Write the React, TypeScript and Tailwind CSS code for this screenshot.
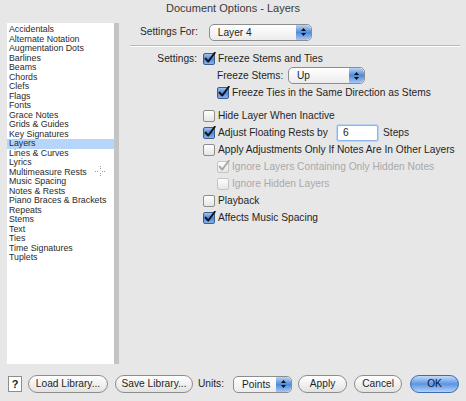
import React from "react";

const items = [
  "Accidentals",
  "Alternate Notation",
  "Augmentation Dots",
  "Barlines",
  "Beams",
  "Chords",
  "Clefs",
  "Flags",
  "Fonts",
  "Grace Notes",
  "Grids & Guides",
  "Key Signatures",
  "Layers",
  "Lines & Curves",
  "Lyrics",
  "Multimeasure Rests",
  "Music Spacing",
  "Notes & Rests",
  "Piano Braces & Brackets",
  "Repeats",
  "Stems",
  "Text",
  "Ties",
  "Time Signatures",
  "Tuplets",
];

function Check({ checked = false, disabled = false }: { checked?: boolean; disabled?: boolean }) {
  return (
    <svg width="13" height="13" viewBox="0 0 13 13" className="shrink-0">
      <defs>
        <linearGradient id="cbBlue" x1="0" y1="0" x2="0" y2="1">
          <stop offset="0" stopColor="#a9c8f2" />
          <stop offset="0.5" stopColor="#4f86d6" />
          <stop offset="1" stopColor="#8fb7ee" />
        </linearGradient>
        <linearGradient id="cbWhite" x1="0" y1="0" x2="0" y2="1">
          <stop offset="0" stopColor="#ffffff" />
          <stop offset="1" stopColor="#e4e4e4" />
        </linearGradient>
      </defs>
      <rect
        x="0.5"
        y="1.5"
        width="11"
        height="11"
        rx="1.5"
        fill={checked && !disabled ? "url(#cbBlue)" : "url(#cbWhite)"}
        stroke={disabled ? "#c4c4c4" : checked ? "#3b5f95" : "#8e8e8e"}
      />
      {checked && (
        <path
          d="M2.6 6.6 L5.2 9.6 L11.8 0.8"
          fill="none"
          stroke={disabled ? "#a8a8a8" : "#111"}
          strokeWidth="1.9"
          strokeLinecap="round"
          strokeLinejoin="round"
        />
      )}
    </svg>
  );
}

function Row({ children, className = "" }: { children: React.ReactNode; className?: string }) {
  return <div className={`flex h-[17px] items-center ${className}`}>{children}</div>;
}

function CheckRow({
  label,
  checked,
  disabled,
  indent,
}: {
  label: string;
  checked?: boolean;
  disabled?: boolean;
  indent?: boolean;
}) {
  return (
    <Row className={indent ? "pl-[14px]" : ""}>
      <Check checked={checked} disabled={disabled} />
      <span className={`ml-[2px] ${disabled ? "text-[#a9a9a9]" : "text-[#1f1f1f]"}`}>{label}</span>
    </Row>
  );
}

function Stepper() {
  return (
    <div className="flex h-full w-[15px] flex-col items-center justify-center gap-[2px] rounded-r-[5px] bg-gradient-to-b from-[#b8d3f6] via-[#4f8ad9] to-[#a6c7f3]">
      <svg width="5" height="3" viewBox="0 0 5 3">
        <path d="M0 3 L2.5 0 L5 3 Z" fill="#111" />
      </svg>
      <svg width="5" height="3" viewBox="0 0 5 3">
        <path d="M0 0 L2.5 3 L5 0 Z" fill="#111" />
      </svg>
    </div>
  );
}

function Popup({ label, width }: { label: string; width: string }) {
  return (
    <div className={`flex h-[17px] items-stretch overflow-hidden rounded-[5px] border border-[#8d8d8d] bg-gradient-to-b from-white to-[#ececec] ${width}`}>
      <span className="flex-1 pl-[8px] leading-[15px] text-[#1f1f1f]">{label}</span>
      <Stepper />
    </div>
  );
}

function Pill({ children, primary, width }: { children: React.ReactNode; primary?: boolean; width: string }) {
  return (
    <div
      className={`flex h-[18px] items-center justify-center rounded-full border ${width} ${
        primary
          ? "border-[#3f6cb0] bg-gradient-to-b from-[#c3dbfa] via-[#5c95e2] to-[#b3d2f8] text-[#0d1a33]"
          : "border-[#8d8d8d] bg-gradient-to-b from-white via-[#f1f1f1] to-[#e2e2e2] text-[#1f1f1f]"
      }`}
    >
      {children}
    </div>
  );
}

export default function App() {
  return (
    <div
      className="relative flex h-[401px] w-[466px] flex-col overflow-hidden bg-[#e7e7e7] text-[10.2px] text-[#1f1f1f]"
      style={{ fontFamily: '"Liberation Sans", Arial, sans-serif' }}
    >
      <div className="flex h-[17px] items-center justify-center text-[11px] text-[#3a3a3a]">
        Document Options - Layers
      </div>

      <div className="mt-[6px] flex">
        <div className="ml-[7px] flex h-[341px]">
          <div className="w-[107px] bg-white pt-[2px]">
            {items.map((item) => (
              <div
                key={item}
                className={`h-[9.5px] pl-[2px] text-[8.8px] leading-[9.5px] text-[#2a2a2a] ${
                  item === "Layers" ? "bg-[#b5d5fb]" : ""
                }`}
              >
                {item}
              </div>
            ))}
          </div>
          <div className="w-[5px] bg-[#c4c4c4]" />
        </div>

        <div className="ml-[11px] flex w-[330px] flex-col">
          <div className="flex h-[18px] items-center pl-[10px]">
            <span className="text-[#2a2a2a]">Settings For:</span>
            <div className="ml-[11px]">
              <Popup label="Layer 4" width="w-[103px]" />
            </div>
          </div>

          <div className="mt-[4px] h-[2px] border-t border-b border-t-[#b9b9b9] border-b-white" />

          <div className="mt-[3px] flex">
            <div className="w-[73px] pr-[6px] text-right">
              <Row className="justify-end">Settings:</Row>
            </div>
            <div className="flex flex-col">
              <CheckRow label="Freeze Stems and Ties" checked />
              <Row className="pl-[14px]">
                <span className="w-[71px]">Freeze Stems:</span>
                <Popup label="Up" width="w-[77px]" />
              </Row>
              <CheckRow label="Freeze Ties in the Same Direction as Stems" checked indent />
              <div className="mt-[6px]" />
              <CheckRow label="Hide Layer When Inactive" />
              <Row>
                <Check checked />
                <span className="ml-[2px] w-[119px]">Adjust Floating Rests by</span>
                <div className="flex h-[16px] w-[41px] items-center rounded-[2px] border border-[#8fb4e8] bg-white pl-[5px] shadow-[0_0_0_1px_#b9d3f5]">
                  6
                </div>
                <span className="ml-[5px]">Steps</span>
              </Row>
              <CheckRow label="Apply Adjustments Only If Notes Are In Other Layers" />
              <CheckRow label="Ignore Layers Containing Only Hidden Notes" checked disabled indent />
              <CheckRow label="Ignore Hidden Layers" disabled indent />
              <CheckRow label="Playback" />
              <CheckRow label="Affects Music Spacing" checked />
            </div>
          </div>
        </div>
      </div>

      <svg className="absolute left-[95px] top-[166px]" width="11" height="11" viewBox="0 0 11 11">
        <path d="M5.5 0 V4 M5.5 7 V11 M0 5.5 H4 M7 5.5 H11" stroke="#9a9a9a" strokeWidth="1" strokeDasharray="1 1" />
      </svg>

      <div className="mt-[11px] flex items-center pl-[8px]">
        <div className="flex h-[16px] w-[14px] items-center justify-center border border-[#8d8d8d] bg-white text-[11px] font-bold">
          ?
        </div>
        <div className="ml-[6px]">
          <Pill width="w-[80px]">Load Library...</Pill>
        </div>
        <div className="ml-[7px]">
          <Pill width="w-[78px]">Save Library...</Pill>
        </div>
        <span className="ml-[5px]">Units:</span>
        <div className="ml-[9px]">
          <Popup label="Points" width="w-[59px]" />
        </div>
        <div className="ml-[6px]">
          <Pill width="w-[49px]">Apply</Pill>
        </div>
        <div className="ml-[7px]">
          <Pill width="w-[48px]">Cancel</Pill>
        </div>
        <div className="ml-[8px]">
          <Pill width="w-[49px]" primary>
            OK
          </Pill>
        </div>
      </div>
    </div>
  );
}
